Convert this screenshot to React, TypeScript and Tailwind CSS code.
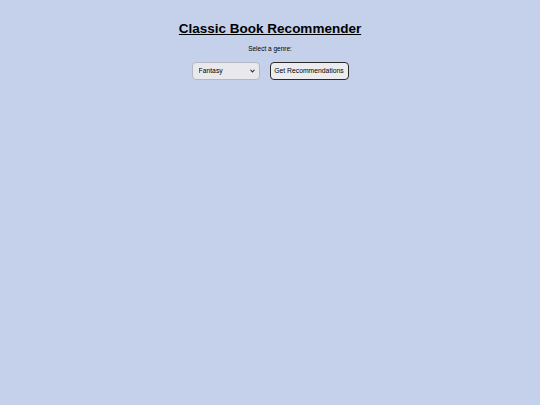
import React, { useState } from 'react';

const genres = ['Fantasy', 'Science Fiction', 'Mystery', 'Romance', 'Adventure'];

export default function App() {
  const [genre, setGenre] = useState('Fantasy');

  return (
    <div className="min-h-screen w-full bg-[#c5d1ea] font-['Liberation_Sans',Arial,sans-serif] text-black">
      <div className="flex flex-col items-center pt-[21px]">
        <h1 className="text-[13.5px] leading-[16px] font-bold underline">Classic Book Recommender</h1>
        <p className="mt-[7px] text-[6.5px] leading-[9px]">Select a genre:</p>
        <div className="mt-[9px] flex items-center gap-[10px]">
          <div className="relative">
            <select
              value={genre}
              onChange={(e) => setGenre(e.target.value)}
              className="block h-[18px] w-[68px] appearance-none rounded-[4px] border border-[#b4b8c2] bg-[#e9e9ed] pl-[6px] text-[6.8px] outline-none"
            >
              {genres.map((g) => (
                <option key={g} value={g}>
                  {g}
                </option>
              ))}
            </select>
            <svg
              className="pointer-events-none absolute right-[5px] top-[7px] h-[4px] w-[5px]"
              viewBox="0 0 10 8"
              fill="none"
              stroke="#222"
              strokeWidth="2.2"
            >
              <path d="M1 1.5 5 6 9 1.5" />
            </svg>
          </div>
          <button className="h-[18px] w-[79px] rounded-[4px] border border-[#2a2a2a] bg-[#ececee] text-[6.8px]">
            Get Recommendations
          </button>
        </div>
      </div>
    </div>
  );
}
